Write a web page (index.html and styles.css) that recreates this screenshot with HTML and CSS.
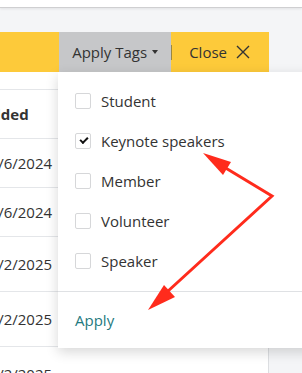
FILE: index.html
```html
<!DOCTYPE html>
<html lang="en">
<head>
  <meta charset="UTF-8" />
  <meta name="viewport" content="width=device-width, initial-scale=1.0"/>
  <title>Contacts | Apply Tags</title>
  <link rel="stylesheet" href="styles.css">
</head>
<body>
  <header class="topbar"></header>

  <div class="page">
    <div class="toolbar-wrap">
      <div class="toolbar">
        <button class="btn-tags">Apply Tags <span class="caret"></span></button>
        <span class="sep"></span>
        <button class="btn-close">Close
          <svg width="14" height="14" viewBox="0 0 14 14"><path d="M1 1 L13 13 M13 1 L1 13" stroke="#333" stroke-width="1.4" fill="none"/></svg>
        </button>
      </div>

      <div class="dropdown">
        <ul class="tag-list">
          <li><span class="check"></span>Student</li>
          <li><span class="check checked"></span>Keynote speakers</li>
          <li><span class="check"></span>Member</li>
          <li><span class="check"></span>Volunteer</li>
          <li><span class="check"></span>Speaker</li>
        </ul>
        <div class="dropdown-foot">
          <a href="#" class="apply">Apply</a>
        </div>
      </div>
    </div>

    <div class="main">
      <div class="table">
        <div class="row row-top"></div>
        <div class="row head">Added</div>
        <div class="row">27/6/2024</div>
        <div class="row">27/6/2024</div>
        <div class="row tall">27/2/2025</div>
        <div class="row tall">27/2/2025</div>
        <div class="row tall">27/2/2025</div>
      </div>
    </div>
  </div>

  <!-- annotation arrows -->
  <svg class="notes" width="302" height="373" viewBox="0 0 302 373">
    <polyline points="224,167 272,196 167,292" fill="none" stroke="#ff2b1c" stroke-width="3" stroke-linejoin="miter"/>
    <polygon points="203,153 231,162 223,175" fill="#ff2b1c"/>
    <polygon points="148,310 164,285 175,297" fill="#ff2b1c"/>
  </svg>
</body>
</html>
```

FILE: styles.css
```css
body {
  font-family: 'Open Sans', sans-serif;
  font-size: 15px;
  color: #333;
  background-color: #f4f5f7;
  margin: 0;
  width: 302px;
  height: 373px;
  overflow: hidden;
  position: relative;
}

.topbar {
  height: 7px;
  background-color: white;
  border-bottom: 1px solid #cfcfd1;
  box-shadow: 0 1px 3px rgba(0,0,0,0.08);
}

.page {
  padding-top: 24px;
}

.toolbar-wrap {
  position: relative;
  width: 269px;
}

.toolbar {
  height: 40px;
  background-color: #fdca3a;
  display: flex;
  align-items: center;
  justify-content: flex-end;
}

.toolbar button {
  font-family: inherit;
  font-size: 15px;
  color: #333;
  border: none;
  height: 40px;
  display: flex;
  align-items: center;
  cursor: pointer;
}

.btn-tags {
  background-color: #c6c7c9;
  padding: 0 12px 0 13px;
  width: 112px;
}

.caret {
  display: inline-block;
  margin-left: 5px;
  border-left: 3.5px solid transparent;
  border-right: 3.5px solid transparent;
  border-top: 4px solid #333;
}

.sep {
  width: 1px;
  height: 15px;
  background-color: #9a8740;
}

.btn-close {
  background-color: transparent;
  padding: 0 19px 0 17px;
  gap: 9px;
}

.dropdown {
  position: absolute;
  top: 100%;
  left: 58px;
  width: 270px;
  background-color: white;
  box-shadow: 0 4px 12px rgba(0,0,0,0.16);
  z-index: 2;
}

.tag-list {
  list-style: none;
  margin: 0;
  padding: 9px 0 10px;
  border-bottom: 1px solid #dfe1e4;
}

.tag-list li {
  height: 40px;
  display: flex;
  align-items: center;
  padding-left: 17px;
}

.check {
  width: 14px;
  height: 14px;
  border: 1px solid #d6d7d9;
  border-radius: 2px;
  margin-right: 10px;
  position: relative;
}

.check.checked::after {
  content: "";
  position: absolute;
  left: 4px;
  top: 3px;
  width: 6px;
  height: 3px;
  border-left: 2px solid #111;
  border-bottom: 2px solid #111;
  transform: rotate(-45deg);
}

.dropdown-foot {
  height: 56px;
  display: flex;
  align-items: center;
  padding-left: 17px;
}

.apply {
  color: #1f7a80;
  text-decoration: none;
}

.main {
  width: 268px;
  background-color: white;
  border-right: 1px solid #dcdee1;
  overflow: hidden;
}

.table {
  margin-left: -19px;
}

.row {
  height: 48px;
  border-bottom: 1px solid #e4e6e9;
  display: flex;
  align-items: center;
}

.row-top { height: 17px; }
.row.tall { height: 54px; }
.head { font-weight: bold; }

.notes {
  position: absolute;
  left: 0;
  top: 0;
  z-index: 3;
}
```
